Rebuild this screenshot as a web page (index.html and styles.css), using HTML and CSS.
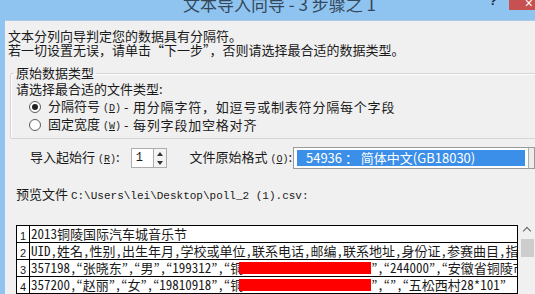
FILE: index.html
```html
<!DOCTYPE html>
<html>
<head>
  <meta charset="utf-8">
  <title>文本导入向导 - 3 步骤之 1</title>
  <link rel="stylesheet" href="styles.css">
</head>
<body>
  <div class="window">
    <header class="titlebar">
      <span class="title">文本导入向导 - 3 步骤之 1</span>
      <span class="help">?</span>
      <span class="close">×</span>
    </header>
    <main class="content">
      <p class="intro">文本分列向导判定您的数据具有分隔符。<br>若一切设置无误，请单击“下一步”，否则请选择最合适的数据类型。</p>

      <fieldset class="group">
        <legend>原始数据类型</legend>
        <div class="hint">请选择最合适的文件类型:</div>
        <div class="option">
          <span class="radio checked"></span>
          <span class="opt-name">分隔符号 <span class="key">(<u>D</u>)</span></span>
          <span class="opt-desc">- 用分隔字符，如逗号或制表符分隔每个字段</span>
        </div>
        <div class="option">
          <span class="radio"></span>
          <span class="opt-name">固定宽度 <span class="key">(<u>W</u>)</span></span>
          <span class="opt-desc">- 每列字段加空格对齐</span>
        </div>
      </fieldset>

      <div class="start-row">
        <span class="field-label">导入起始行 <span class="key">(<u>R</u>)</span>:</span>
        <div class="spin">
          <span class="spin-value">1</span>
          <span class="spin-btns">
            <span class="arrow up"></span>
            <span class="arrow down"></span>
          </span>
        </div>
        <span class="field-label origin">文件原始格式 <span class="key">(<u>O</u>)</span>:</span>
        <div class="combo">
          <span class="combo-value">54936 ： 简体中文(GB18030)</span>
          <span class="combo-btn"></span>
        </div>
      </div>

      <div class="preview-label">预览文件 <span class="path">C:\Users\lei\Desktop\poll_2 (1).csv:</span></div>

      <div class="preview">
        <div class="grid">
          <div class="row"><span class="num">1</span><span class="cell">2013铜陵国际汽车城音乐节</span></div>
          <div class="row"><span class="num">2</span><span class="cell">UID,姓名,性别,出生年月,学校或单位,联系电话,邮编,联系地址,身份证,参赛曲目,指导老师</span></div>
          <div class="row"><span class="num">3</span><span class="cell">357198,“张晓东”,“男”,“199312”,“铜<span class="redact"></span>”,“244000”,“安徽省铜陵市”</span></div>
          <div class="row"><span class="num">4</span><span class="cell">357200,“赵丽”,“女”,“19810918”,“铜<span class="redact"></span>”,“”,“五松西村28*101”</span></div>
        </div>
        <div class="scrollbar">
          <span class="chev up"></span>
          <span class="thumb"></span>
          <span class="chev down"></span>
        </div>
      </div>
    </main>
  </div>
</body>
</html>
```

FILE: styles.css
```css
* {
  box-sizing: border-box;
  margin: 0;
  padding: 0;
}
body {
  width: 535px;
  height: 294px;
  overflow: hidden;
  background-color: #f0f0f0;
  font-family: "Noto Sans CJK SC", "Liberation Sans", sans-serif;
  font-size: 13px;
  line-height: 14px;
  color: #1a1a1a;
}
.window {
  height: 294px;
  border-left: 5px solid #8fc4f0;
  overflow: hidden;
}
.titlebar {
  display: flex;
  align-items: flex-start;
  height: 21px;
  background-color: #8fc4f0;
  border-bottom: 1px solid #a9cbe8;
  margin-left: -5px;
}
.title {
  margin-left: 183px;
  margin-top: -6px;
  font-size: 17px;
  line-height: 20px;
  color: #34475a;
}
.help {
  margin-left: auto;
  margin-top: -6px;
  font-family: "Liberation Sans", sans-serif;
  font-weight: bold;
  font-size: 13px;
  line-height: 14px;
  color: #1d2a36;
}
.close {
  width: 26px;
  height: 10px;
  margin-left: 12px;
  background-color: #c75050;
  color: #fff;
  font-family: "Liberation Sans", sans-serif;
  font-size: 14px;
  line-height: 6px;
  text-align: right;
  padding-right: 2px;
  overflow: hidden;
}
.content {
  padding-left: 3px;
}
.intro {
  margin-top: 8px;
}
.key {
  font-family: "Liberation Mono", monospace;
  font-size: 10px;
}

/* 原始数据类型 */
.group {
  margin: 9px -30px 0 2px;
  padding: 2px 5px 4px;
  border: 1px solid #d5d5d5;
  border-radius: 2px;
  box-shadow: inset 1px 1px 0 #fff;
}
.group legend {
  padding: 0 2px;
  margin-left: -2px;
  line-height: 14px;
}
.hint {
  height: 16px;
}
.option {
  display: flex;
  align-items: center;
  height: 18px;
  padding-left: 13px;
  white-space: nowrap;
}
.radio {
  width: 12px;
  height: 12px;
  border: 1px solid #5a5a5a;
  border-radius: 50%;
  background-color: #fff;
  display: flex;
  align-items: center;
  justify-content: center;
}
.radio.checked::after {
  content: "";
  width: 6px;
  height: 6px;
  border-radius: 50%;
  background-color: #222;
}
.opt-name {
  width: 76px;
  margin-left: 7px;
}
.opt-desc {
  letter-spacing: 0.8px;
}

/* 导入起始行 */
.start-row {
  display: flex;
  align-items: center;
  height: 22px;
  margin-top: 8px;
  white-space: nowrap;
}
.field-label {
  margin-left: 22px;
  width: 104px;
}
.field-label.origin {
  margin-left: 22px;
  width: 107px;
}
.spin {
  display: flex;
  width: 38px;
  height: 20px;
  border: 1px solid #adadad;
  background-color: #fff;
}
.spin-value {
  flex: 1;
  padding-left: 4px;
  font-family: "Liberation Mono", monospace;
  font-size: 12px;
  line-height: 18px;
}
.spin-btns {
  width: 13px;
  display: flex;
  flex-direction: column;
  justify-content: space-around;
  align-items: center;
  border-left: 1px solid #adadad;
  background-color: #f4f4f4;
}
.arrow {
  width: 0;
  height: 0;
  border-left: 3px solid transparent;
  border-right: 3px solid transparent;
}
.arrow.up {
  border-bottom: 4px solid #333;
}
.arrow.down {
  border-top: 4px solid #333;
}
.combo {
  display: flex;
  width: 250px;
  height: 22px;
  border: 1px solid #9a9a9a;
  background-color: #fff;
  padding: 2px 0 2px 3px;
}
.combo-value {
  width: 228px;
  background-color: #3c8fe8;
  color: #fff;
  padding-left: 9px;
  line-height: 16px;
  font-size: 13px;
}
.combo-btn {
  flex: 1;
  margin-left: 3px;
  margin-top: -2px;
  margin-bottom: -2px;
  border-left: 1px solid #adadad;
  background-color: #ececec;
}

/* 预览 */
.preview-label {
  margin-top: 18px;
  padding-left: 8px;
}
.path {
  font-family: "Liberation Mono", monospace;
  font-size: 11px;
}
.preview {
  display: flex;
  margin-top: 22px;
  padding-left: 8px;
}
.grid {
  width: 502px;
  border: 1px solid #000;
  background-color: #fff;
}
.row {
  display: flex;
  height: 17px;
  border-bottom: 1px solid #000;
}
.num {
  width: 13px;
  border-right: 1px solid #000;
  font-family: "Liberation Sans", sans-serif;
  font-size: 11px;
  line-height: 20px;
  padding-left: 3px;
}
.cell {
  flex: 1;
  padding-left: 1px;
  white-space: nowrap;
  overflow: hidden;
  line-height: 16px;
  font-family: "Noto Sans Mono CJK KR", "Noto Sans Mono CJK SC", monospace;
}
.redact {
  display: inline-block;
  width: 132px;
  height: 12px;
  margin-left: -4px;
  vertical-align: -1px;
  background-color: #ff0000;
}
.scrollbar {
  width: 17px;
  margin-left: 1px;
  margin-top: -2px;
  display: flex;
  flex-direction: column;
  align-items: center;
}
.chev {
  width: 6px;
  height: 6px;
  border-left: 1.5px solid #606060;
  border-top: 1.5px solid #606060;
}
.chev.up {
  margin-top: 5px;
  transform: rotate(45deg);
}
.chev.down {
  margin-top: 38px;
  transform: rotate(225deg);
}
.thumb {
  width: 13px;
  height: 18px;
  margin-top: 5px;
  background-color: #cdcdcd;
}
```
